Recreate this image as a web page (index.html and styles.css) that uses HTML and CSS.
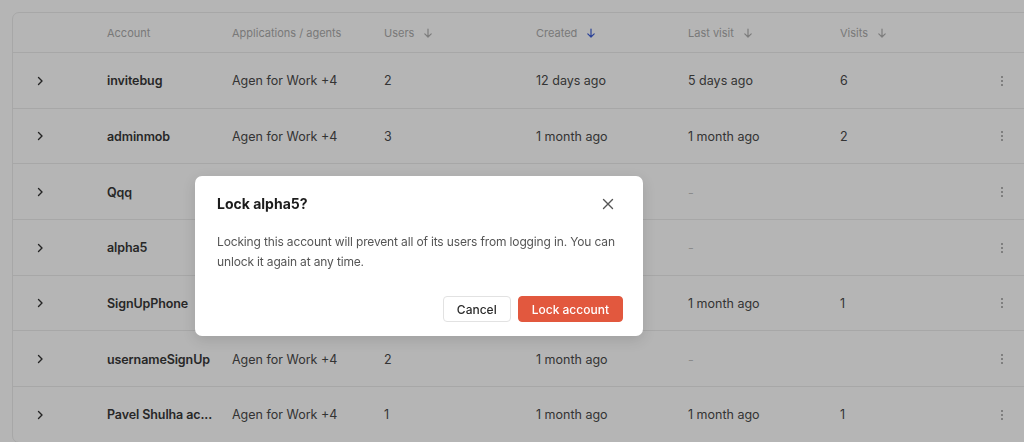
FILE: index.html
```html
<!DOCTYPE html>
<html lang="en">
	<head>
		<meta charset="UTF-8" />
		<meta name="viewport" content="width=device-width, initial-scale=1.0" />
		<title>Accounts</title>
		<link rel="stylesheet" href="styles.css">
	</head>
	<body>
		<div class="page">
			<div class="table">
				<div class="row head">
					<div class="cell"></div>
					<div class="cell">Account</div>
					<div class="cell">Applications / agents</div>
					<div class="cell">Users <span class="sort"><svg width="10" height="10" viewBox="0 0 10 10"><path d="M5 1v8M1.8 5.8 5 9l3.2-3.2" /></svg></span></div>
					<div class="cell">Created <span class="sort active"><svg width="10" height="10" viewBox="0 0 10 10"><path d="M5 1v8M1.8 5.8 5 9l3.2-3.2" /></svg></span></div>
					<div class="cell">Last visit <span class="sort"><svg width="10" height="10" viewBox="0 0 10 10"><path d="M5 1v8M1.8 5.8 5 9l3.2-3.2" /></svg></span></div>
					<div class="cell">Visits <span class="sort"><svg width="10" height="10" viewBox="0 0 10 10"><path d="M5 1v8M1.8 5.8 5 9l3.2-3.2" /></svg></span></div>
					<div class="cell"></div>
				</div>

				<div class="row">
					<div class="cell expand"><svg width="8" height="10" viewBox="0 0 8 10"><path d="M2.5 1.5 6 5 2.5 8.5" /></svg></div>
					<div class="cell name">invitebug</div>
					<div class="cell">Agen for Work +4</div>
					<div class="cell">2</div>
					<div class="cell">12 days ago</div>
					<div class="cell">5 days ago</div>
					<div class="cell">6</div>
					<div class="cell more"><span></span><span></span><span></span></div>
				</div>
				<div class="row">
					<div class="cell expand"><svg width="8" height="10" viewBox="0 0 8 10"><path d="M2.5 1.5 6 5 2.5 8.5" /></svg></div>
					<div class="cell name">adminmob</div>
					<div class="cell">Agen for Work +4</div>
					<div class="cell">3</div>
					<div class="cell">1 month ago</div>
					<div class="cell">1 month ago</div>
					<div class="cell">2</div>
					<div class="cell more"><span></span><span></span><span></span></div>
				</div>
				<!-- middle cells of the next rows sit under the dialog -->
				<div class="row">
					<div class="cell expand"><svg width="8" height="10" viewBox="0 0 8 10"><path d="M2.5 1.5 6 5 2.5 8.5" /></svg></div>
					<div class="cell name">Qqq</div>
					<div class="cell"></div>
					<div class="cell"></div>
					<div class="cell"></div>
					<div class="cell empty">-</div>
					<div class="cell"></div>
					<div class="cell more"><span></span><span></span><span></span></div>
				</div>
				<div class="row">
					<div class="cell expand"><svg width="8" height="10" viewBox="0 0 8 10"><path d="M2.5 1.5 6 5 2.5 8.5" /></svg></div>
					<div class="cell name">alpha5</div>
					<div class="cell"></div>
					<div class="cell"></div>
					<div class="cell"></div>
					<div class="cell empty">-</div>
					<div class="cell"></div>
					<div class="cell more"><span></span><span></span><span></span></div>
				</div>
				<div class="row">
					<div class="cell expand"><svg width="8" height="10" viewBox="0 0 8 10"><path d="M2.5 1.5 6 5 2.5 8.5" /></svg></div>
					<div class="cell name">SignUpPhone</div>
					<div class="cell"></div>
					<div class="cell"></div>
					<div class="cell"></div>
					<div class="cell">1 month ago</div>
					<div class="cell">1</div>
					<div class="cell more"><span></span><span></span><span></span></div>
				</div>
				<div class="row">
					<div class="cell expand"><svg width="8" height="10" viewBox="0 0 8 10"><path d="M2.5 1.5 6 5 2.5 8.5" /></svg></div>
					<div class="cell name">usernameSignUp</div>
					<div class="cell">Agen for Work +4</div>
					<div class="cell">2</div>
					<div class="cell">1 month ago</div>
					<div class="cell empty">-</div>
					<div class="cell"></div>
					<div class="cell more"><span></span><span></span><span></span></div>
				</div>
				<div class="row">
					<div class="cell expand"><svg width="8" height="10" viewBox="0 0 8 10"><path d="M2.5 1.5 6 5 2.5 8.5" /></svg></div>
					<div class="cell name" title="Pavel Shulha account">Pavel Shulha ac...</div>
					<div class="cell">Agen for Work +4</div>
					<div class="cell">1</div>
					<div class="cell">1 month ago</div>
					<div class="cell">1 month ago</div>
					<div class="cell">1</div>
					<div class="cell more"><span></span><span></span><span></span></div>
				</div>
			</div>
		</div>

		<div class="overlay"></div>

		<div class="dialog">
			<div class="dialog-head">
				<h2>Lock alpha5?</h2>
				<button class="close" aria-label="Close"><svg width="12" height="12" viewBox="0 0 12 12"><path d="M1.5 1.5l9 9M10.5 1.5l-9 9" /></svg></button>
			</div>
			<p>Locking this account will prevent all of its users from logging in. You can unlock it again at any time.</p>
			<div class="actions">
				<button class="btn">Cancel</button>
				<button class="btn danger">Lock account</button>
			</div>
		</div>
	</body>
</html>
```

FILE: styles.css
```css
body {
	margin: 0;
	background-color: #fff;
	font-family: Inter, "Noto Sans", sans-serif;
	color: #2a2a2a;
	overflow: hidden;
	height: 442px;
}

.page {
	padding: 12px 0 0 12px;
}

.table {
	width: 1040px;
	border: 1px solid #ececec;
	border-radius: 7px;
}

.row {
	display: grid;
	grid-template-columns: 94px 125px 152px 152px 152px 152px 145px 32px 1fr;
	align-items: center;
	height: 54.67px;
	border-top: 1px solid #ececec;
	font-size: 12.5px;
	color: #4a4a4a;
}

.row.head {
	height: 39px;
	border-top: none;
	font-size: 11px;
	color: #ababab;
}

.row:not(.head) .cell {
	padding-top: 1px;
}

.cell {
	display: flex;
	align-items: center;
	min-width: 0;
}

.sort {
	display: inline-flex;
	margin-left: 9px;
}

.sort svg {
	fill: none;
	stroke: #b0b0b0;
	stroke-width: 1.2;
	stroke-linecap: round;
	stroke-linejoin: round;
}

.sort.active svg {
	stroke: #3f5fd6;
}

.expand {
	padding-left: 23px;
}

.expand svg {
	fill: none;
	stroke: #333;
	stroke-width: 1.4;
	stroke-linecap: round;
	stroke-linejoin: round;
}

.name {
	font-weight: 600;
	color: #383838;
	padding-right: 10px;
	letter-spacing: -0.1px;
	white-space: nowrap;
}

.empty {
	color: #c4c4c4;
}

.more {
	flex-direction: column;
	gap: 2px;
	padding-left: 16px;
	align-items: flex-start;
}

.more span {
	width: 2px;
	height: 2px;
	border-radius: 50%;
	background-color: #9a9a9a;
}

.overlay {
	position: fixed;
	inset: 0;
	background-color: rgba(0, 0, 0, 0.29);
}

.dialog {
	position: absolute;
	left: 195px;
	top: 176px;
	width: 448px;
	height: 160px;
	box-sizing: border-box;
	padding: 19px 20px 14px 22px;
	background-color: #fff;
	border-radius: 7px;
	box-shadow: 0 4px 14px rgba(0, 0, 0, 0.12);
}

.dialog-head {
	display: flex;
	align-items: center;
	justify-content: space-between;
}

.dialog h2 {
	margin: 0;
	font-size: 14px;
	font-weight: 700;
	color: #1c1c1c;
}

.close {
	border: none;
	background: none;
	padding: 0;
	margin-right: 9px;
	display: flex;
	cursor: pointer;
}

.close svg {
	fill: none;
	stroke: #555;
	stroke-width: 1.4;
	stroke-linecap: round;
}

.dialog p {
	margin: 20px 0 0;
	font-size: 12px;
	line-height: 20px;
	letter-spacing: -0.15px;
	color: #555;
	max-width: 404px;
}

.actions {
	display: flex;
	justify-content: flex-end;
	gap: 7px;
	margin-top: 24px;
}

.btn {
	height: 26px;
	padding: 0 13px;
	border: 1px solid #e2e2e2;
	border-radius: 4px;
	background-color: #fff;
	font-family: inherit;
	font-size: 12px;
	font-weight: 500;
	color: #2a2a2a;
	cursor: pointer;
}

.btn.danger {
	border-color: #e2583e;
	background-color: #e2583e;
	color: #fff;
	padding: 0 13px;
}
```
